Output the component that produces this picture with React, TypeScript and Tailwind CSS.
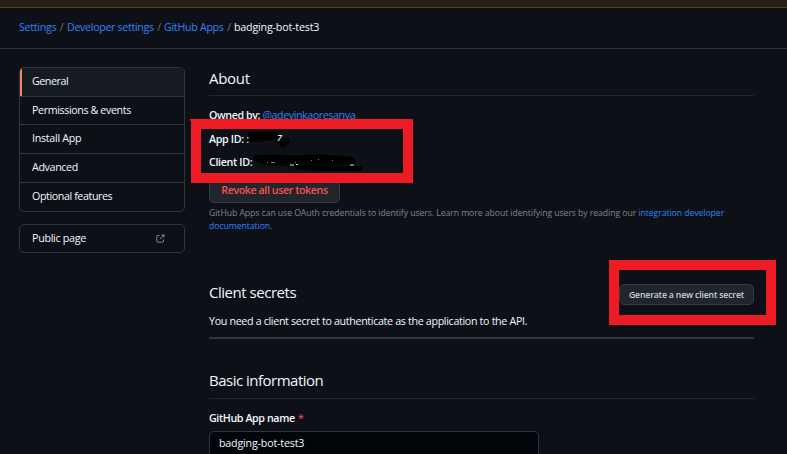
import React from "react";

const navItems = [
  { label: "Permissions & events", cls: "h-7 tracking-[-0.38px]" },
  { label: "Install App", cls: "h-[29px]" },
  { label: "Advanced", cls: "h-[29px] tracking-[-0.36px]" },
  { label: "Optional features", cls: "h-[29px] tracking-[-0.4px]" },
];

function Breadcrumbs() {
  return (
    <nav className="flex h-[41px] items-center border-b border-[#30363d] pb-0.5 pl-[19px] text-[#2f81f7]">
      <a className="w-[37px]">Settings</a>
      <span className="w-[11px] text-center text-[#6e7681]">/</span>
      <a className="w-[87px] tracking-[-0.33px]">Developer settings</a>
      <span className="w-2.5 text-center text-[#6e7681]">/</span>
      <a className="w-[60px] tracking-[-0.3px]">GitHub Apps</a>
      <span className="w-2.5 text-center text-[#6e7681]">/</span>
      <span className="tracking-[-0.18px] text-[#f0f6fc]">badging-bot-test3</span>
    </nav>
  );
}

function Sidebar() {
  return (
    <aside className="w-[166px] shrink-0">
      <div className="overflow-hidden rounded-[5px] border border-[#30363d]">
        <div className="relative flex h-7 items-center bg-[#161b22] pb-0.5 pl-3 tracking-[-0.45px]">
          <span className="absolute inset-y-0 left-0 w-0.5 bg-[#f78166]" />
          General
        </div>
        {navItems.map((item) => (
          <div key={item.label} className={`flex items-center border-t border-[#30363d] pb-0.5 pl-3 ${item.cls}`}>
            {item.label}
          </div>
        ))}
      </div>
      <div className="mt-3 flex h-[29px] items-center justify-between rounded-[5px] border border-[#30363d] pr-[19px] pb-0.5 pl-3">
        Public page
        <svg className="mt-0.5" width="9" height="9" viewBox="0 0 9 9" fill="none" stroke="#7d8590" strokeWidth="1">
          <path d="M3.5 1.5H1.5Q.8 1.5 .8 2.2V7.5Q.8 8.2 1.5 8.2H6.8Q7.5 8.2 7.5 7.5V5.5M3.8 5.2 7.3 1.7" />
          <path d="M5.2.5H8.5V3.8Z" fill="#7d8590" stroke="none" />
        </svg>
      </div>
    </aside>
  );
}

function Annotations() {
  return (
    <>
      <svg className="absolute top-[125px] left-[240px]" width="130" height="50" fill="none" stroke="#000" strokeLinecap="round" strokeLinejoin="round">
        <path d="M11 9.500H35M13 14 36 12 40 16 47 16 42 19" strokeWidth="6" />
        <path d="M17 33 18 34 35 33 52 34 80 33 108 35 112 36 90 37 55 37 28 37 22 35" strokeWidth="7" />
        <path d="M57 42 80 43.500 120 43.500" strokeWidth="4.500" />
        <path d="M27 37.500h1M31 37.500h4M55 37.500h1M71 35.500h1M78 34.500h1M92 35.500h1" stroke="#77797c" strokeWidth="1" strokeLinecap="butt" />
        <path d="M50 40h4M56 39.500h2M110 40h4" stroke="#d8d9da" strokeWidth="1" strokeLinecap="butt" />
      </svg>
      <span className="absolute top-[132px] left-[277px] text-[9px] leading-3 font-semibold italic">7</span>
      <div className="absolute top-[119px] left-[191px] h-16 w-[222px] border-10 border-[#ed1c24]" />
      <div className="absolute top-[119px] left-[190px] h-0.5 w-1 bg-[#ed1c24]" />
      <div className="absolute top-[260px] left-[609px] h-[65px] w-[167px] border-10 border-[#ed1c24]" />
    </>
  );
}

export default function App() {
  return (
    <div className="relative h-[454px] w-[787px] overflow-hidden bg-[#0d1117] font-['Open_Sans','Noto_Sans',sans-serif] text-[10.7px] leading-4 tracking-[-0.28px] whitespace-nowrap text-[#f0f6fc]">
      <div className="h-2 border-b border-[#5d4411] bg-[#272115]" />
      <Breadcrumbs />
      <div className="flex gap-6 pt-[18px] pl-[19px]">
        <Sidebar />
        <main className="w-[545px]">
          <h2 className="flex h-[29px] items-center border-b border-[#21262d] pb-1.5 text-[15px] tracking-[-0.3px]">About</h2>
          <p className="mt-[11px] tracking-[-0.42px]"><b className="font-semibold">Owned by:</b> <a className="text-[#2f81f7]">@adeyinkaoresanya</a></p>
          <p className="mt-2"><b className="font-semibold tracking-[-0.35px]">App ID:</b> :</p>
          <p className="mt-[7px]"><b className="font-semibold tracking-[-0.35px]">Client ID:</b></p>
          <button className="mt-[7px] flex h-[26px] w-[131px] items-center justify-center rounded-[5px] border border-[#363b42] bg-[#21262d] font-semibold tracking-[-0.43px] text-[#f85149]">Revoke all user tokens</button>
          <p className="mt-1 text-[8.700px] leading-[13px] tracking-[-0.073px] text-[#7d8590]">
            GitHub Apps can use OAuth credentials to identify users. Learn more about identifying users by reading our <a className="text-[#2f81f7]">integration developer<br />documentation</a>.
          </p>
          <div className="mt-[48px] flex h-[22px] items-center justify-between">
            <h2 className="text-[15px] tracking-[-0.47px]">Client secrets</h2>
            <button className="mt-[5px] flex h-[21px] w-[135px] shrink-0 items-center justify-center rounded-[5px] border border-[#363b42] bg-[#21262d] text-[8.700px] font-semibold tracking-[-0.16px] text-[#c9d1d9]">Generate a new client secret</button>
          </div>
          <p className="mt-2.5 tracking-[-0.33px]">You need a client secret to authenticate as the application to the API.</p>
          <div className="mt-2 h-0.5 bg-[#30363d]" />
          <h2 className="mt-[30px] flex h-[30px] items-center border-b border-[#21262d] pb-[7px] text-[15px] tracking-[-0.5px]">Basic information</h2>
          <label className="mt-[11px] block font-semibold tracking-[-0.4px]">GitHub App name <span className="ml-px font-normal text-[#f85149]">*</span></label>
          <div className="mt-[5px] flex h-[26px] w-[330px] items-center rounded-[5px] border border-[#30363d] bg-[#010409] pb-0.5 pl-[9px] tracking-[-0.18px]">badging-bot-test3</div>
        </main>
      </div>
      <Annotations />
    </div>
  );
}
